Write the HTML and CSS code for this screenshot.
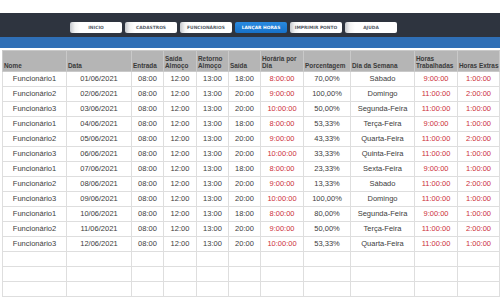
FILE: index.html
```html
<!DOCTYPE html>
<html>
<head>
    <link rel="stylesheet" href="styles.css">
</head>
<body>
    <div class="topbar">
        <nav class="menu">
            <a class="btn">INICIO</a>
            <a class="btn">CADASTROS</a>
            <a class="btn">FUNCIONÁRIOS</a>
            <a class="btn active">LANÇAR HORAS</a>
            <a class="btn">IMPRIMIR PONTO</a>
            <a class="btn">AJUDA</a>
        </nav>
    </div>
    <div class="strip"></div>

    <table class="grid">
        <colgroup>
            <col class="w-nome"><col class="w-data"><col class="w-hora"><col class="w-hora2"><col class="w-hora">
            <col class="w-hora"><col class="w-hpd"><col class="w-pct"><col class="w-dia"><col class="w-ht"><col class="w-he">
        </colgroup>
        <tr>
            <th>Nome</th><th>Data</th><th>Entrada</th><th>Saída<br>Almoço</th><th>Retorno<br>Almoço</th><th>Saída</th>
            <th>Horária por<br>Dia</th><th>Porcentagem</th><th>Dia da Semana</th><th>Horas<br>Trabalhadas</th><th>Horas Extras</th>
        </tr>
        <tr><td>Funcionário1</td><td>01/06/2021</td><td>08:00</td><td>12:00</td><td>13:00</td><td>18:00</td><td class="red">8:00:00</td><td>70,00%</td><td>Sábado</td><td class="red">9:00:00</td><td class="red">1:00:00</td></tr>
        <tr><td>Funcionário2</td><td>02/06/2021</td><td>08:00</td><td>12:00</td><td>13:00</td><td>20:00</td><td class="red">9:00:00</td><td>100,00%</td><td>Domingo</td><td class="red">11:00:00</td><td class="red">2:00:00</td></tr>
        <tr><td>Funcionário3</td><td>03/06/2021</td><td>08:00</td><td>12:00</td><td>13:00</td><td>20:00</td><td class="red">10:00:00</td><td>50,00%</td><td>Segunda-Feira</td><td class="red">11:00:00</td><td class="red">1:00:00</td></tr>
        <tr><td>Funcionário1</td><td>04/06/2021</td><td>08:00</td><td>12:00</td><td>13:00</td><td>18:00</td><td class="red">8:00:00</td><td>53,33%</td><td>Terça-Feira</td><td class="red">9:00:00</td><td class="red">1:00:00</td></tr>
        <tr><td>Funcionário2</td><td>05/06/2021</td><td>08:00</td><td>12:00</td><td>13:00</td><td>20:00</td><td class="red">9:00:00</td><td>43,33%</td><td>Quarta-Feira</td><td class="red">11:00:00</td><td class="red">2:00:00</td></tr>
        <tr><td>Funcionário3</td><td>06/06/2021</td><td>08:00</td><td>12:00</td><td>13:00</td><td>20:00</td><td class="red">10:00:00</td><td>33,33%</td><td>Quinta-Feira</td><td class="red">11:00:00</td><td class="red">1:00:00</td></tr>
        <tr><td>Funcionário1</td><td>07/06/2021</td><td>08:00</td><td>12:00</td><td>13:00</td><td>18:00</td><td class="red">8:00:00</td><td>23,33%</td><td>Sexta-Feira</td><td class="red">9:00:00</td><td class="red">1:00:00</td></tr>
        <tr><td>Funcionário2</td><td>08/06/2021</td><td>08:00</td><td>12:00</td><td>13:00</td><td>20:00</td><td class="red">9:00:00</td><td>13,33%</td><td>Sábado</td><td class="red">11:00:00</td><td class="red">2:00:00</td></tr>
        <tr><td>Funcionário3</td><td>09/06/2021</td><td>08:00</td><td>12:00</td><td>13:00</td><td>20:00</td><td class="red">10:00:00</td><td>100,00%</td><td>Domingo</td><td class="red">11:00:00</td><td class="red">1:00:00</td></tr>
        <tr><td>Funcionário1</td><td>10/06/2021</td><td>08:00</td><td>12:00</td><td>13:00</td><td>18:00</td><td class="red">8:00:00</td><td>80,00%</td><td>Segunda-Feira</td><td class="red">9:00:00</td><td class="red">1:00:00</td></tr>
        <tr><td>Funcionário2</td><td>11/06/2021</td><td>08:00</td><td>12:00</td><td>13:00</td><td>20:00</td><td class="red">9:00:00</td><td>50,00%</td><td>Terça-Feira</td><td class="red">11:00:00</td><td class="red">2:00:00</td></tr>
        <tr><td>Funcionário3</td><td>12/06/2021</td><td>08:00</td><td>12:00</td><td>13:00</td><td>20:00</td><td class="red">10:00:00</td><td>53,33%</td><td>Quarta-Feira</td><td class="red">11:00:00</td><td class="red">1:00:00</td></tr>
        <tr><td></td><td></td><td></td><td></td><td></td><td></td><td></td><td></td><td></td><td></td><td></td></tr>
        <tr><td></td><td></td><td></td><td></td><td></td><td></td><td></td><td></td><td></td><td></td><td></td></tr>
        <tr><td></td><td></td><td></td><td></td><td></td><td></td><td></td><td></td><td></td><td></td><td></td></tr>
    </table>
</body>
</html>
```

FILE: styles.css
```css
body {
    margin: 0;
    padding-top: 13px;
    font-family: "Liberation Sans", Arial, sans-serif;
    background: #ffffff;
}
.topbar {
    background-color: #2e343f;
    height: 24px;
    box-sizing: border-box;
    padding: 9px 0 0 70px;
}
.menu {
    display: flex;
    gap: 3px;
}
.btn {
    display: block;
    width: 52px;
    height: 11px;
    line-height: 11px;
    text-align: center;
    font-family: "DejaVu Sans", Verdana, sans-serif;
    font-size: 4.4px;
    font-weight: bold;
    color: #555b66;
    background: linear-gradient(to right, #c4c7cc 0, #f4f4f4 5px, #ffffff 10px);
    border-radius: 2px;
}
.btn.active {
    color: #ffffff;
    background: linear-gradient(to bottom, #2a8ae0, #1671c9);
}
.strip {
    background-color: #2f6fb6;
    height: 11px;
    margin-bottom: 2px;
}
.grid {
    margin-left: 2px;
    width: 497px;
    table-layout: fixed;
    border-collapse: collapse;
}
.w-nome { width: 64px; }
.w-data { width: 65px; }
.w-hora { width: 32px; }
.w-hora2 { width: 33px; }
.w-hpd { width: 43px; }
.w-pct { width: 47px; }
.w-dia { width: 64px; }
.w-ht { width: 43px; }
.w-he { width: 42px; }
th {
    height: 18px;
    padding: 0 0 2px 1px;
    background-color: #b5b5b5;
    border: 1px solid #c9c9c9;
    text-align: left;
    vertical-align: bottom;
    font-size: 6.4px;
    line-height: 7px;
    font-weight: bold;
    color: #3a3a3a;
    white-space: nowrap;
    overflow: hidden;
}
td {
    height: 14px;
    padding: 0;
    border: 1px solid #dedede;
    text-align: center;
    font-size: 7.5px;
    line-height: 8px;
    color: #3c3c3c;
    white-space: nowrap;
}
td.red {
    color: #cc2f3a;
}
```
